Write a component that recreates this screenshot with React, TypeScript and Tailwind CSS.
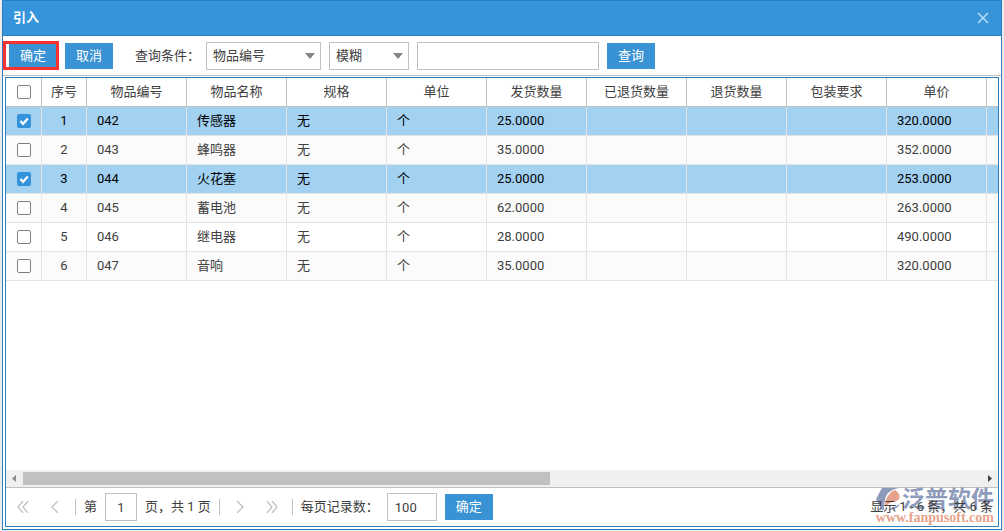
import { useState } from "react";
import type { ReactNode } from "react";

const columns = [
  "物品编号",
  "物品名称",
  "规格",
  "单位",
  "发货数量",
  "已退货数量",
  "退货数量",
  "包装要求",
  "单价",
];

const items = [
  { id: 1, code: "042", name: "传感器", spec: "无", unit: "个", qty: "25.0000", price: "320.0000" },
  { id: 2, code: "043", name: "蜂鸣器", spec: "无", unit: "个", qty: "35.0000", price: "352.0000" },
  { id: 3, code: "044", name: "火花塞", spec: "无", unit: "个", qty: "25.0000", price: "253.0000" },
  { id: 4, code: "045", name: "蓄电池", spec: "无", unit: "个", qty: "62.0000", price: "263.0000" },
  { id: 5, code: "046", name: "继电器", spec: "无", unit: "个", qty: "28.0000", price: "490.0000" },
  { id: 6, code: "047", name: "音响", spec: "无", unit: "个", qty: "35.0000", price: "320.0000" },
];

const BlueButton = ({ children }: { children: ReactNode }) => (
  <button type="button" className="h-[26px] w-12 shrink-0 bg-[#3892d3] text-white">
    {children}
  </button>
);

const Dropdown = ({
  label,
  options,
  className,
}: {
  label: string;
  options: string[];
  className: string;
}) => (
  <div className={`relative ${className}`}>
    <select
      aria-label={label}
      className="h-7 w-full appearance-none border border-[#c0c0c0] bg-white px-1.5"
    >
      {options.map((option) => (
        <option key={option}>{option}</option>
      ))}
    </select>
    <svg
      viewBox="0 0 10 6"
      className="pointer-events-none absolute top-[11px] right-[6px] h-[6px] w-[10px]"
    >
      <path d="M0 0h10L5 6z" fill="#858585" />
    </svg>
  </div>
);

const Tick = ({
  label,
  checked,
  onChange,
}: {
  label: string;
  checked: boolean;
  onChange: () => void;
}) => (
  <span className="mx-auto grid size-[14px]">
    <input
      type="checkbox"
      aria-label={label}
      checked={checked}
      onChange={onChange}
      className="col-start-1 row-start-1 size-[14px] appearance-none rounded-[2px] border border-[#808080] bg-white checked:border-[#3493da] checked:bg-[#3493da]"
    />
    {checked && (
      <svg
        viewBox="0 0 14 14"
        className="pointer-events-none col-start-1 row-start-1 size-[14px]"
      >
        <path d="M3.4 7l2.7 2.8 4.7-5.3" fill="none" stroke="#fff" strokeWidth="2.2" />
      </svg>
    )}
  </span>
);

const PageButton = ({ label, path }: { label: string; path: string }) => (
  <button type="button" aria-label={label} className="flex h-7 w-8 items-center justify-center">
    <svg viewBox="0 0 12 12" className="size-3" fill="none" stroke="#bdbdbd" strokeWidth="1.2">
      <path d={path} />
    </svg>
  </button>
);

const Divider = () => <span className="h-4 w-px bg-[#c0c0c0]" />;

/* 右下角品牌标识 */
const Brand = () => (
  <div className="pointer-events-none absolute top-0 right-1 flex flex-col items-end">
    <div className="flex h-6 items-start">
      <svg viewBox="0 0 27 24" className="h-6 w-[27px]">
        <path d="M7 0h18C15 1 11 6 10 12c-1 4-1 7-1 10L7 22 1 11z" fill="#8e9bbb" />
        <path d="M13 22c5 0 10-2 12-6-3 2-8 3-12 6z" fill="#8e9bbb" />
        <path d="M10 19c0-8 4-15 10-17 3 2 6 5 4 9-2 3-6 2-9 4-2 1-3 3-5 4z" fill="#e6a28b" />
      </svg>
      <span className="text-[23px] leading-6 font-bold text-[#8e9bbb]">泛普软件</span>
    </div>
    <span className="font-['Liberation_Serif',serif] text-sm leading-3 font-bold text-[#e6a28b]">
      www.fanpusoft.com
    </span>
  </div>
);

const App = () => {
  const [selected, setSelected] = useState<number[]>([1, 3]);
  const allSelected = selected.length === items.length;

  const toggle = (id: number) => {
    setSelected((prev) => (prev.includes(id) ? prev.filter((v) => v !== id) : [...prev, id]));
  };

  const toggleAll = () => {
    setSelected(allSelected ? [] : items.map((item) => item.id));
  };

  return (
    <div className="flex min-h-screen bg-[#ececec] px-0.5 pb-px font-[Roboto,'Noto_Sans_CJK_SC',sans-serif] text-[13px] leading-5 text-[#404040]">
      <div className="flex min-w-0 flex-1 flex-col border border-[#2c7fbe] bg-white">
        {/* 标题栏 */}
        <header className="flex h-[35px] items-center justify-between border-b border-[#2c7fbe] bg-[#3594da] pr-3 pl-[10px]">
          <h1 className="font-bold text-white">引入</h1>
          <button type="button" aria-label="关闭">
            <svg viewBox="0 0 12 12" className="size-3" stroke="#b9daf3" strokeWidth="1.6">
              <path d="M1 1l10 10M11 1L1 11" />
            </svg>
          </button>
        </header>

        {/* 查询条件 */}
        <div className="flex h-10 items-center gap-2 border-b border-[#c0c0c0]">
          <div className="flex items-center gap-1.5">
            {/* 红框标注 */}
            <div className="relative flex h-[29px] w-14 items-center pl-1.5">
              <BlueButton>确定</BlueButton>
              <span className="pointer-events-none absolute inset-0 border-[3px] border-[#f9322f]" />
            </div>
            <BlueButton>取消</BlueButton>
          </div>
          <span className="ml-[14px] w-[63px] whitespace-nowrap">查询条件：</span>
          <Dropdown
            label="查询条件"
            options={["物品编号", "物品名称", "规格"]}
            className="w-[115px]"
          />
          <Dropdown label="匹配方式" options={["模糊", "精确"]} className="w-20" />
          <input
            type="text"
            aria-label="查询内容"
            className="h-7 w-[182px] border border-[#c0c0c0] bg-white px-1.5"
          />
          <BlueButton>查询</BlueButton>
        </div>

        <div className="mx-0.5 mt-px mb-0.5 flex min-w-0 flex-1 flex-col border border-[#2c7fbe]">
          {/* 物品列表 */}
          <div className="flex-1 overflow-hidden">
            <table className="w-[1081px] table-fixed border-separate border-spacing-0">
              <colgroup>
                <col className="w-9" />
                <col className="w-[45px]" />
                {columns.map((column) => (
                  <col key={column} className="w-[100px]" />
                ))}
                <col className="w-[100px]" />
              </colgroup>
              <thead>
                <tr className="h-[29px] [&>th]:border-r [&>th]:border-b [&>th]:border-[#c0c0c0] [&>th]:p-0 [&>th]:font-normal">
                  <th>
                    <Tick label="全选" checked={allSelected} onChange={toggleAll} />
                  </th>
                  <th>序号</th>
                  {columns.map((column) => (
                    <th key={column}>{column}</th>
                  ))}
                  <th></th>
                </tr>
              </thead>
              <tbody>
                {items.map((item) => {
                  const checked = selected.includes(item.id);
                  return (
                    <tr
                      key={item.id}
                      className={`h-[29px] [&>td]:border-r [&>td]:border-b [&>td]:border-[#e4e4e4] [&>td]:py-0 [&>td]:pl-[10px] ${
                        checked ? "bg-[#a2d1f2] text-black" : "odd:bg-white even:bg-[#fbfbfb]"
                      }`}
                    >
                      <td className="pl-0!">
                        <Tick
                          label={`选择 ${item.name}`}
                          checked={checked}
                          onChange={() => toggle(item.id)}
                        />
                      </td>
                      <td className="pl-0! text-center">{item.id}</td>
                      <td>{item.code}</td>
                      <td>{item.name}</td>
                      <td>{item.spec}</td>
                      <td>{item.unit}</td>
                      <td>{item.qty}</td>
                      <td></td>
                      <td></td>
                      <td></td>
                      <td>{item.price}</td>
                      <td></td>
                    </tr>
                  );
                })}
              </tbody>
            </table>
          </div>

          {/* 横向滚动条 */}
          <div className="flex h-[17px] items-center bg-[#f0f0f0]">
            <svg viewBox="0 0 17 17" className="size-[17px]">
              <path d="M10 5v7L6 8.500z" fill="#8a8a8a" />
            </svg>
            <div className="flex-1">
              <div className="h-[13px] w-[55%] bg-[#c1c1c1]" />
            </div>
            <svg viewBox="0 0 17 17" className="size-[17px]">
              <path d="M7 5v7l4-3.500z" fill="#404040" />
            </svg>
          </div>

          {/* 分页 */}
          <footer className="relative flex h-[39px] items-center border-t border-[#c0c0c0] px-px">
            <div className="mr-1 flex items-center">
              <PageButton label="首页" path="M6 0L1 6l5 6M11 0L6 6l5 6" />
              <PageButton label="上一页" path="M9 0L3 6l6 6" />
            </div>
            <Divider />
            <label htmlFor="page" className="ml-2">
              第
            </label>
            <input
              id="page"
              type="text"
              defaultValue="1"
              className="mx-2 h-7 w-8 border border-[#c0c0c0] bg-white text-center"
            />
            <span className="mr-2">页，共 1 页</span>
            <Divider />
            <div className="mx-1 flex items-center">
              <PageButton label="下一页" path="M3 0l6 6-6 6" />
              <PageButton label="末页" path="M1 0l5 6-5 6M6 0l5 6-5 6" />
            </div>
            <Divider />
            <label htmlFor="size" className="ml-2 w-[86px] whitespace-nowrap">
              每页记录数：
            </label>
            <input
              id="size"
              type="text"
              defaultValue="100"
              className="mr-2 h-7 w-[50px] border border-[#c0c0c0] bg-white px-[7px]"
            />
            <BlueButton>确定</BlueButton>
            <Brand />
            <span className="relative mr-1 ml-auto">显示 1 - 6 条，共 6 条</span>
          </footer>
        </div>
      </div>
    </div>
  );
};

export default App;
